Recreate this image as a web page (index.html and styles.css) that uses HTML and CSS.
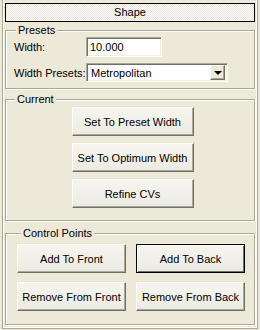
FILE: index.html
```html
<!DOCTYPE html>
<html lang="en">
<head>
  <meta charset="UTF-8">
  <title>Shape</title>
  <link rel="stylesheet" href="styles.css">
</head>
<body>
  <div class="rollout">
    <div class="title">Shape</div>

    <!-- Presets -->
    <fieldset class="group presets">
      <legend>Presets</legend>
      <div class="row">
        <label>Width:</label>
        <input class="spinner" type="text" value="10.000">
      </div>
      <div class="row">
        <label>Width Presets:</label>
        <div class="dropdown">
          <span>Metropolitan</span>
          <span class="arrow"></span>
        </div>
      </div>
    </fieldset>

    <!-- Current -->
    <fieldset class="group current">
      <legend>Current</legend>
      <button class="btn wide">Set To Preset Width</button>
      <button class="btn wide">Set To Optimum Width</button>
      <button class="btn wide">Refine CVs</button>
    </fieldset>

    <!-- Control Points -->
    <fieldset class="group points">
      <legend>Control Points</legend>
      <div class="grid">
        <button class="btn">Add To Front</button>
        <button class="btn default">Add To Back</button>
        <button class="btn">Remove From Front</button>
        <button class="btn">Remove From Back</button>
      </div>
    </fieldset>
  </div>
</body>
</html>
```

FILE: styles.css
```css
* {
  box-sizing: border-box;
}

body {
  margin: 0;
  background: #ece9d8;
  font-family: "Liberation Sans", Arial, sans-serif;
  font-size: 11px;
  color: #000;
  overflow: hidden;
}

.rollout {
  margin: 0 2px;
  height: 329px;
  border-left: 1px solid #aca899;
  border-right: 1px solid #aca899;
  border-bottom: 1px solid #aca899;
  box-shadow: inset 1px 0 0 #fff, inset -1px -1px 0 #fff;
  padding: 3px 2px 0 2px;
}

.title {
  height: 19px;
  line-height: 17px;
  border: 1px solid #000;
  background: repeating-conic-gradient(#faf9f5 0 25%, #e9e7de 0 50%) 0 0 / 2px 2px;
  text-align: center;
}

.group {
  margin: 2px 0 0 0;
  padding: 0 6px 6px 6px;
  border: 1px solid #aca899;
  box-shadow: inset 1px 1px 0 #fff, 1px 1px 0 #fff;
  min-width: 0;
}

.group legend {
  padding: 0 2px;
  margin-left: 4px;
  line-height: 13px;
  background: #ece9d8;
}

.row {
  display: flex;
  align-items: center;
  margin-bottom: 6px;
}

.row:last-child {
  margin-bottom: 0;
}

.row label {
  width: 74px;
  padding-left: 2px;
}

.spinner {
  width: 76px;
  height: 20px;
  padding: 1px 3px;
  font: inherit;
  border: 1px solid;
  border-color: #aca899 #fff #fff #aca899;
  box-shadow: inset 1px 1px 0 #716f64, inset -1px -1px 0 #f1efe2;
  outline: none;
}

.dropdown {
  display: flex;
  align-items: center;
  justify-content: space-between;
  width: 142px;
  height: 19px;
  padding: 1px 2px 1px 4px;
  background: #fff;
  border: 1px solid;
  border-color: #aca899 #fff #fff #aca899;
  box-shadow: inset 1px 1px 0 #716f64, inset -1px -1px 0 #f1efe2;
}

.arrow {
  width: 15px;
  height: 15px;
  background: #ece9d8;
  border: 1px solid;
  border-color: #fff #716f64 #716f64 #fff;
  box-shadow: inset -1px -1px 0 #aca899;
  position: relative;
}

.arrow::after {
  content: "";
  position: absolute;
  left: 3px;
  top: 5px;
  border-left: 4px solid transparent;
  border-right: 4px solid transparent;
  border-top: 4px solid #000;
}

.current {
  display: flex;
  flex-direction: column;
  align-items: center;
  gap: 7px;
  margin-top: 4px;
  padding: 1px 0 12px 5px;
}

.btn {
  height: 29px;
  font: inherit;
  color: #000;
  white-space: nowrap;
  background: linear-gradient(#f5f4ee, #ecebe3);
  border: 1px solid;
  border-color: #fff #716f64 #716f64 #fff;
  box-shadow: inset -1px -1px 0 #aca899;
  padding: 0;
}

.wide {
  width: 122px;
}

.points {
  margin-top: 6px;
  padding: 4px 9px 13px 11px;
}

.grid {
  display: grid;
  grid-template-columns: 109px 109px;
  justify-content: space-between;
  gap: 9px 9px;
}

.default {
  border: 1px solid #000;
  box-shadow: inset 1px 1px 0 #fff, inset -1px -1px 0 #716f64;
}
```
